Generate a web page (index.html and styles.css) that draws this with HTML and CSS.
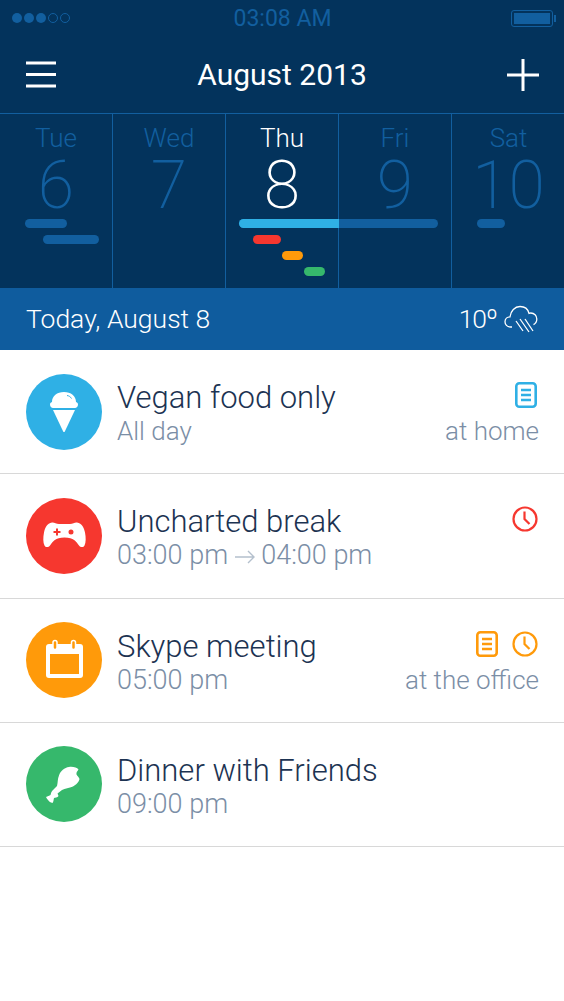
FILE: index.html
```html
<!DOCTYPE html>
<html lang="en">
<head>
    <meta charset="UTF-8">
    <meta name="viewport" content="width=device-width, initial-scale=1.0">
    <title>Calendar</title>
    <link rel="stylesheet" href="styles.css">
</head>
<body>
<div class="top">
    <div class="status">
        <div class="signal">
            <span class="dot"></span><span class="dot"></span><span class="dot"></span><span class="dot off"></span><span class="dot off"></span>
        </div>
        <div class="clock">03:08 AM</div>
        <div class="battery"><span class="battery-fill"></span></div>
    </div>
    <div class="nav">
        <svg class="nav-icon" viewBox="0 0 32 32"><path d="M1 4h30M1 15.500h30M1 27h30" stroke="#fff" stroke-width="3" fill="none"/></svg>
        <div class="month">August 2013</div>
        <svg class="nav-icon" viewBox="0 0 32 32"><path d="M16 0v32M0 16h32" stroke="#fff" stroke-width="3" fill="none"/></svg>
    </div>
    <div class="week">
        <div class="day"><div class="day-name">Tue</div><div class="day-num">6</div></div>
        <div class="day"><div class="day-name">Wed</div><div class="day-num">7</div></div>
        <div class="day active"><div class="day-name">Thu</div><div class="day-num">8</div></div>
        <div class="day"><div class="day-name">Fri</div><div class="day-num">9</div></div>
        <div class="day"><div class="day-name">Sat</div><div class="day-num">10</div></div>
        <span class="bar dim tue-a"></span>
        <span class="bar dim tue-b"></span>
        <span class="bar dim thu-long"></span>
        <span class="bar light thu-today"></span>
        <span class="bar red thu-red"></span>
        <span class="bar orange thu-orange"></span>
        <span class="bar green thu-green"></span>
        <span class="bar dim sat-a"></span>
    </div>
</div>

<div class="today">
    <div>Today, August 8</div>
    <div class="weather">
        <span class="temp">10º</span>
        <svg class="cloud" viewBox="0 0 34 28" fill="none" stroke="#fff" stroke-width="1.300">
            <path d="M8 22H6.500C3 22 1 19.500 1 16.800 1 14 3.200 11.800 6 11.800 6.600 6 10.800 1.500 16 1.500c4.500 0 8 2.800 9 6.800 .6-.2 1.200-.3 1.800-.3 3.500 0 6 2.800 6 6 0 2.500-1.300 4.600-3.300 5.600"/>
            <path d="M12 16l7 10M16 14l9 13M21 14l8 12"/>
        </svg>
    </div>
</div>

<div class="list">
    <div class="event">
        <div class="badge blue">
            <svg viewBox="0 0 76 76" fill="#fff">
                <path d="M26 28C26 22 31 18 38 18s12 4 12 10c1.500.5 2 1.500 2 2.500 0 2-1.500 3.500-3 3.500H27c-1.500 0-3-1.500-3-3.500 0-1 .5-2 2-2.500z"/>
                <path d="M27 36h22L38.800 57.500c-.4.700-1.200.7-1.600 0z"/>
                <path d="M41 21.500c2 .3 3.500 1.300 4.500 3" fill="none" stroke="#2fb0e5" stroke-width="1"/>
            </svg>
        </div>
        <div class="info">
            <div class="title">Vegan food only</div>
            <div class="sub">All day</div>
        </div>
        <div class="side">
            <div class="marks">
                <svg class="doc" viewBox="0 0 22 26" fill="none" stroke="#2fb0e5" stroke-width="2.600"><rect x="1.300" y="1.300" width="19.400" height="23.400" rx="3"/><path d="M6 8h10M6 13h10M6 18h10"/></svg>
            </div>
            <div class="place">at home</div>
        </div>
    </div>
    <div class="event">
        <div class="badge red">
            <svg viewBox="0 0 76 76" fill="#fff">
                <path fill-rule="evenodd" d="M26 24.500c2-.5 4 1.500 7 1.500h11c3 0 5-2 7-1.500 5 1 7 5 8 10 1 5 1 10-.5 13-1 2-4 2-5.500 0-3-4-5-8-14.500-8s-11.500 4-14.500 8c-1.500 2-4.500 2-5.500 0-1.500-3-1.500-8-.5-13 1-5 3-9 8-10zM30 30.500v2.500h-2.500v2h2.500v2.500h2V35h2.500v-2H32v-2.500zM45 31.500a2.500 2.500 0 1 0 0 5 2.500 2.500 0 0 0 0-5z"/>
            </svg>
        </div>
        <div class="info">
            <div class="title">Uncharted break</div>
            <div class="sub time">03:00 pm <svg class="arrow" viewBox="0 0 20 14" fill="none" stroke="#b4c0cd" stroke-width="1.400"><path d="M0 7h19M13 1l6 6-6 6"/></svg> 04:00 pm</div>
        </div>
        <div class="side">
            <div class="marks">
                <svg class="mark" viewBox="0 0 26 26" fill="none" stroke="#f6372f" stroke-width="2.200"><circle cx="13" cy="13" r="11.500"/><path d="M12.500 5.500V13l5 5"/></svg>
            </div>
        </div>
    </div>
    <div class="event">
        <div class="badge orange">
            <svg viewBox="0 0 76 76">
                <rect x="20" y="22" width="37" height="34" rx="3" fill="#fff"/>
                <rect x="24" y="32" width="29" height="20" fill="#ff9a0a"/>
                <rect x="27" y="18.500" width="4" height="9" rx="2" fill="#ff9a0a" stroke="#fff" stroke-width="1.500"/>
                <rect x="45.500" y="18.500" width="4" height="9" rx="2" fill="#ff9a0a" stroke="#fff" stroke-width="1.500"/>
            </svg>
        </div>
        <div class="info">
            <div class="title">Skype meeting</div>
            <div class="sub time">05:00 pm</div>
        </div>
        <div class="side">
            <div class="marks">
                <svg class="doc" viewBox="0 0 22 26" fill="none" stroke="#ff9a0a" stroke-width="2.600"><rect x="1.300" y="1.300" width="19.400" height="23.400" rx="3"/><path d="M6 8h10M6 13h10M6 18h10"/></svg>
                <svg class="mark" viewBox="0 0 26 26" fill="none" stroke="#ff9a0a" stroke-width="2.200"><circle cx="13" cy="13" r="11.500"/><path d="M12.500 5.500V13l5 5"/></svg>
            </div>
            <div class="place">at the office</div>
        </div>
    </div>
    <div class="event">
        <div class="badge green">
            <svg viewBox="0 0 76 76" fill="#fff">
                <path d="M43 21C47 20.500 51 21.500 52.500 23.500 51.500 25 50 26.500 50.500 28.500 51 30 53 31 53.500 33 53 36 50 39 47 40.500 43 42.500 39 42 36 44L31.500 47.500 32.500 50C31.500 51.500 29 51.500 28 52 27.500 54 27.500 56 26.500 57 24.500 56.500 23 55.500 22 54 21 53 20.500 52 20 51 21.500 50 23.500 50 24.500 49 25 47.500 25 46 26.500 44.500L31 40C32 36 31.500 33 33 29.500 34.500 25 38.500 21.500 43 21Z"/>
            </svg>
        </div>
        <div class="info">
            <div class="title">Dinner with Friends</div>
            <div class="sub time">09:00 pm</div>
        </div>
    </div>
</div>
</body>
</html>
```

FILE: styles.css
```css
* {
    box-sizing: border-box;
}

body {
    margin: 0;
    background-color: #fff;
    font-family: 'Roboto', 'Liberation Sans', sans-serif;
    font-weight: 300;
}

.top {
    background-color: #03335c;
    color: #fff;
}

.status {
    height: 36px;
    padding: 0 11px 0 12px;
    display: grid;
    grid-template-columns: 1fr auto 1fr;
    align-items: center;
}

.signal {
    display: flex;
    gap: 2px;
}

.dot {
    width: 10px;
    height: 10px;
    border-radius: 50%;
    background-color: #125f9f;
}

.dot.off {
    background: none;
    border: 1px solid #125f9f;
}

.clock {
    font-size: 23px;
    font-weight: 400;
    color: #125f9f;
}

.battery {
    position: relative;
    justify-self: end;
    width: 42px;
    height: 17px;
    padding: 2px;
    border: 1px solid #125f9f;
    border-radius: 3px;
}

.battery::after {
    content: "";
    position: absolute;
    right: -4px;
    top: 4px;
    width: 2px;
    height: 7px;
    background-color: #125f9f;
}

.battery-fill {
    display: block;
    height: 100%;
    background-color: #125f9f;
}

.nav {
    height: 77px;
    padding: 0 25px;
    display: flex;
    align-items: center;
    justify-content: space-between;
}

.nav-icon {
    width: 32px;
    height: 32px;
}

.month {
    font-size: 30px;
    font-weight: 400;
}

.week {
    position: relative;
    display: grid;
    grid-template-columns: repeat(5, 113px);
    height: 175px;
    border-top: 1px solid #125f9f;
}

.day {
    text-align: center;
    color: #125f9f;
    border-right: 1px solid #125f9f;
    padding-top: 9px;
}

.day:nth-child(5) {
    border-right: none;
}

.day.active {
    color: #fff;
}

.day-name {
    font-size: 26px;
    line-height: 30px;
}

.day-num {
    font-size: 66px;
    font-weight: 200;
    line-height: 66px;
}

.bar {
    position: absolute;
    height: 9px;
    border-radius: 5px;
}

.bar.dim { background-color: #125f9f; }
.bar.light { background-color: #2fb0e5; }
.bar.red { background-color: #f6372f; }
.bar.orange { background-color: #ff9a0a; }
.bar.green { background-color: #36b86c; }

.tue-a { left: 25px; top: 105px; width: 42px; }
.tue-b { left: 43px; top: 121px; width: 56px; }
.thu-long { left: 239px; top: 105px; width: 199px; }
.thu-today { left: 239px; top: 105px; width: 100px; border-radius: 5px 0 0 5px; }
.thu-red { left: 253px; top: 121px; width: 28px; }
.thu-orange { left: 282px; top: 137px; width: 21px; }
.thu-green { left: 304px; top: 153px; width: 21px; }
.sat-a { left: 477px; top: 105px; width: 28px; }

.today {
    height: 62px;
    padding: 0 26px 2px;
    background-color: #0f5c9e;
    color: #fff;
    font-size: 26.500px;
    display: flex;
    align-items: center;
    justify-content: space-between;
}

.weather {
    display: flex;
    align-items: center;
    gap: 7px;
}

.temp {
    letter-spacing: -1px;
}

.cloud {
    width: 34px;
    height: 28px;
    margin-top: 2px;
}

.event {
    height: 124.250px;
    padding: 0 25px 0 26px;
    display: flex;
    align-items: center;
    border-bottom: 1px solid #d8d8d8;
}

.badge {
    width: 76px;
    height: 76px;
    border-radius: 50%;
    margin-right: 15px;
    flex-shrink: 0;
}

.badge svg {
    display: block;
    width: 76px;
    height: 76px;
}

.badge.blue { background-color: #2fb0e5; }
.badge.red { background-color: #f6372f; }
.badge.orange { background-color: #ff9a0a; }
.badge.green { background-color: #36b86c; }

.info {
    flex: 1;
    padding-top: 2px;
}

.title {
    font-size: 31px;
    line-height: 38px;
    margin-bottom: -1px;
    color: #1c3352;
}

.sub {
    font-size: 26px;
    line-height: 30px;
    color: #7b8ea6;
}

.sub.time {
    font-size: 27px;
}

.arrow {
    width: 20px;
    height: 14px;
}

.side {
    align-self: flex-start;
    padding-top: 32px;
    text-align: right;
}

.marks {
    display: flex;
    justify-content: flex-end;
    gap: 14px;
    height: 28px;
    margin-right: 1px;
    margin-bottom: 6px;
}

.mark {
    width: 26px;
    height: 26px;
}

.doc {
    width: 22px;
    height: 26px;
}

.doc:only-child {
    margin-right: 1px;
}

.place {
    font-size: 26px;
    line-height: 30px;
    color: #7b8ea6;
}
```
